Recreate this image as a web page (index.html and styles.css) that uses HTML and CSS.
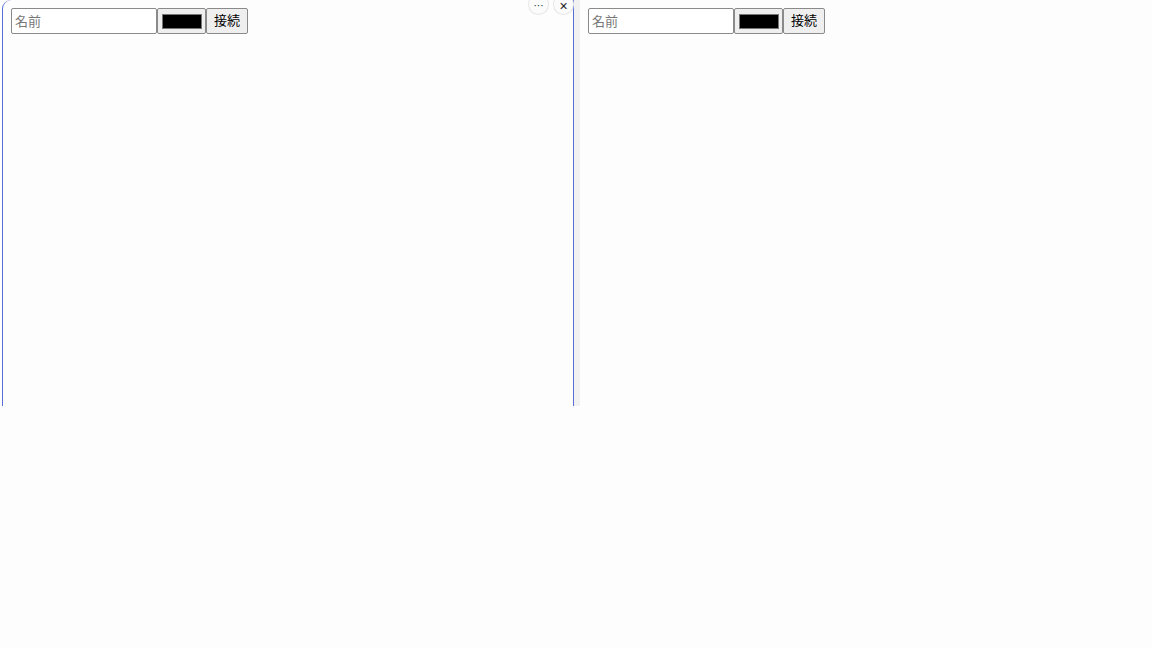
FILE: index.html
```html
<!DOCTYPE html>
<html lang="ja">
<head>
<meta charset="utf-8">
<title>接続</title>
<link rel="stylesheet" href="styles.css">
</head>
<body>
<div class="stage">
  <section class="pane pane-active">
    <form class="bar">
      <input class="name" type="text" placeholder="名前">
      <span class="color"><span class="swatch"></span></span>
      <button class="connect" type="button">接続</button>
    </form>
    <div class="tools">
      <span class="tool">···</span>
      <span class="tool tool-close">×</span>
    </div>
  </section>
  <div class="gutter"></div>
  <section class="pane pane-right">
    <form class="bar">
      <input class="name" type="text" placeholder="名前">
      <span class="color"><span class="swatch"></span></span>
      <button class="connect" type="button">接続</button>
    </form>
  </section>
</div>
</body>
</html>
```

FILE: styles.css
```css
html, body {
  margin: 0;
  padding: 0;
  background: #fdfdfd;
  font-family: "Liberation Sans", "Noto Sans CJK JP", sans-serif;
}

.stage {
  display: flex;
  height: 406px;
  padding-left: 2px;
}

.pane {
  position: relative;
  background: #fdfdfd;
  box-sizing: border-box;
}

.pane-active {
  flex: 0 0 571px;
  border-left: 1px solid #5a6ed8;
  border-top-left-radius: 9px;
  padding: 8px 0 0 8px;
}

.gutter {
  flex: 0 0 7px;
  background: #f1f1f1;
  border-left: 1px solid #5a6ed8;
  box-sizing: border-box;
}

.pane-right {
  flex: 1;
  border-top-left-radius: 8px;
  padding: 8px 0 0 8px;
}

.bar {
  display: flex;
  margin: 0;
  height: 26px;
}

.name {
  box-sizing: border-box;
  width: 146px;
  height: 26px;
  margin: 0;
  padding: 0 3px 2px;
  border: 1px solid #8a8a8a;
  border-radius: 2px;
  background: #ffffff;
  font-family: "Noto Sans CJK JP", sans-serif;
  font-size: 13px;
  color: #222;
  outline: none;
}

.name::placeholder {
  color: #777777;
}

.color {
  box-sizing: border-box;
  width: 49px;
  height: 26px;
  border: 1px solid #8a8a8a;
  border-radius: 2px;
  background: #efefef;
  display: flex;
  align-items: center;
  justify-content: center;
}

.swatch {
  display: block;
  width: 40px;
  height: 15px;
  box-sizing: border-box;
  background: #000;
  border: 1px solid #777;
}

.connect {
  box-sizing: border-box;
  height: 26px;
  width: 42px;
  margin: 0;
  padding: 0 0 3px;
  line-height: 20px;
  border: 1px solid #8a8a8a;
  border-radius: 2px;
  background: #efefef;
  font-family: "Noto Sans CJK JP", sans-serif;
  font-size: 13px;
  color: #000;
}

.tools {
  position: absolute;
  top: -5px;
  right: 0;
  display: flex;
  gap: 6px;
}

.tool {
  width: 19px;
  height: 19px;
  border-radius: 50%;
  background: #fbfbfb;
  box-shadow: 0 0 0 1px #e6e6e6;
  display: flex;
  align-items: center;
  justify-content: center;
  font-size: 10px;
  line-height: 1;
  color: #222;
  padding-top: 3px;
  box-sizing: border-box;
}

.tool-close {
  font-size: 14px;
  padding-top: 2px;
}
```
